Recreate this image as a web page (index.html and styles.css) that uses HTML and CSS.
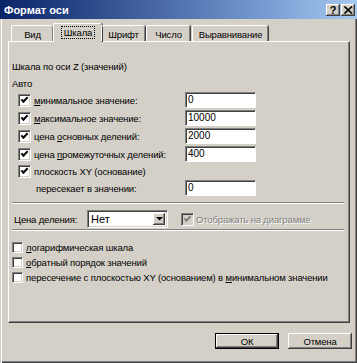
FILE: index.html
```html
<!DOCTYPE html>
<html lang="ru">
<head>
<meta charset="utf-8">
<title>Формат оси</title>
<link rel="stylesheet" href="styles.css">
</head>
<body>
<div class="window">
  <div class="titlebar">
    <span class="title">Формат оси</span>
    <div class="tb-buttons">
      <span class="tb-btn">?</span>
      <span class="tb-btn"><svg width="9" height="8" viewBox="0 0 9 8"><path d="M0.5 0.5 L8 7.5 M8 0.5 L0.5 7.5" stroke="#000" stroke-width="1.6"/></svg></span>
    </div>
  </div>
  <div class="frame">
    <div class="tabs">
      <div class="tab t1">Вид</div>
      <div class="tab active t2"><span class="focus">Шкала</span></div>
      <div class="tab t3">Шрифт</div>
      <div class="tab t4">Число</div>
      <div class="tab t5">Выравнивание</div>
    </div>
    <div class="panel">
      <div class="heading">Шкала по оси Z (значений)</div>
      <div class="auto">Авто</div>
      <div class="row">
        <label class="chk"><span class="box checked"></span><span><u>м</u>инимальное значение:</span></label>
        <span class="field">0</span>
      </div>
      <div class="row">
        <label class="chk"><span class="box checked"></span><span><u>м</u>аксимальное значение:</span></label>
        <span class="field">10000</span>
      </div>
      <div class="row">
        <label class="chk"><span class="box checked"></span><span>цена <u>о</u>сновных делений:</span></label>
        <span class="field">2000</span>
      </div>
      <div class="row">
        <label class="chk"><span class="box checked"></span><span>цена <u>п</u>ромежуточных делений:</span></label>
        <span class="field">400</span>
      </div>
      <div class="row short">
        <label class="chk"><span class="box checked"></span><span>плоскость XY (основание)</span></label>
      </div>
      <div class="row">
        <span class="indent">пересекает в значении:</span>
        <span class="field">0</span>
      </div>
      <div class="sep first"></div>
      <div class="unit-row">
        <span class="unit-label">Цена деления:</span>
        <span class="select"><span class="sel-text">Нет</span><span class="sel-btn"><svg width="7" height="4" viewBox="0 0 7 4"><path d="M0 0 H7 L3.5 3.5 Z" fill="#000"/></svg></span></span>
        <label class="chk disabled"><span class="box checked"></span><span>Отображать на диаграмме</span></label>
      </div>
      <div class="sep second"></div>
      <div class="opts">
        <label class="chk small"><span class="box"></span><span><u>л</u>огарифмическая шкала</span></label>
        <label class="chk small"><span class="box"></span><span><u>о</u>братный порядок значений</span></label>
        <label class="chk small"><span class="box"></span><span>пересечение с плоскостью XY (основанием) в <u>м</u>инимальном значении</span></label>
      </div>
    </div>
    <div class="buttons">
      <span class="btn default">ОК</span>
      <span class="btn">Отмена</span>
    </div>
  </div>
</div>
</body>
</html>
```

FILE: styles.css
```css
html, body {
  margin: 0;
  padding: 0;
  background: #d4d0c8;
}
body {
  font-family: "Liberation Sans", Arial, sans-serif;
  font-size: 9.5px;
  letter-spacing: -0.15px;
  color: #000;
}
.window {
  width: 357px;
  height: 363px;
  display: flex;
  flex-direction: column;
  overflow: hidden;
}
.titlebar {
  height: 19px;
  flex: none;
  background: linear-gradient(to right, #0a246a 0%, #3a5a98 35%, #7094cc 70%, #a6caf0 100%);
  display: flex;
  align-items: center;
  justify-content: space-between;
  padding: 0 2px 0 4px;
}
.title {
  color: #fff;
  font-weight: bold;
  font-size: 11px;
  letter-spacing: 0;
}
.tb-buttons {
  display: flex;
  gap: 1px;
}
.tb-btn {
  width: 14px;
  height: 12px;
  background: #d4d0c8;
  box-shadow: inset -1px -1px #404040, inset 1px 1px #fff, inset -2px -2px #808080;
  display: flex;
  align-items: center;
  justify-content: center;
  font-weight: bold;
  font-size: 11px;
  line-height: 12px;
}
.frame {
  flex: 1;
  border-left: 1px solid #d4d0c8;
  box-shadow: inset 1px 0 #fff, inset -1px -1px #404040, inset -2px -2px #808080;
  padding: 0 4px 0 8px;
  display: flex;
  flex-direction: column;
}
.tabs {
  height: 22px;
  display: flex;
  align-items: flex-end;
  padding-left: 2px;
  position: relative;
  z-index: 1;
}
.tab {
  box-sizing: border-box;
  height: 16px;
  border-top: 1px solid #fff;
  border-left: 1px solid #fff;
  border-radius: 2px 2px 0 0;
  box-shadow: inset -1px 0 #808080, 1px 0 #404040;
  display: flex;
  align-items: center;
  justify-content: center;
  padding-top: 1px;
  margin-right: 1px;
}
.t1 { width: 42px; }
.t2 { width: 49px; }
.t3 { width: 44px; }
.t4 { width: 44px; margin-right: 2px; }
.t5 { width: 76px; }
.tab.active {
  height: 19px;
  margin: 0 -1px -1px -1px;
  background: #d4d0c8;
  padding-top: 0;
  padding-bottom: 2px;
}
.focus {
  outline: 1px dotted #000;
  padding: 0 2px;
  line-height: 11px;
}
.panel {
  box-sizing: border-box;
  height: 282px;
  margin-left: -1px;
  width: 342px;
  border-top: 1px solid #fff;
  border-left: 1px solid #fff;
  border-right: 1px solid #404040;
  border-bottom: 1px solid #404040;
  box-shadow: inset -1px -1px #808080;
  padding: 18px 0 0 0;
  display: flex;
  flex-direction: column;
}
.heading {
  height: 14px;
  line-height: 14px;
  padding-left: 3px;
}
.auto {
  height: 14px;
  line-height: 14px;
  padding-left: 3px;
  margin-top: 3px;
}
.row {
  height: 18px;
  display: grid;
  grid-template-columns: 176px 70px;
  align-items: center;
}
.row.short {
  height: 16px;
}
.chk {
  display: flex;
  align-items: center;
  gap: 3px;
  padding-left: 9px;
  white-space: nowrap;
}
.box {
  box-sizing: border-box;
  width: 13px;
  height: 13px;
  flex: none;
  background: #fff;
  border-top: 1px solid #808080;
  border-left: 1px solid #808080;
  border-right: 1px solid #fff;
  border-bottom: 1px solid #fff;
  box-shadow: inset 1px 1px #404040, inset -1px -1px #d4d0c8;
  position: relative;
}
.box.checked::after {
  content: "";
  position: absolute;
  left: 2px;
  top: 1px;
  width: 5px;
  height: 2px;
  border-left: 2px solid #000;
  border-bottom: 2px solid #000;
  transform: translate(0, 1px) rotate(-45deg);
  transform-origin: center;
}
.indent {
  padding-left: 27px;
}
.field {
  box-sizing: border-box;
  height: 16px;
  width: 71px;
  background: #fff;
  border-top: 1px solid #808080;
  border-left: 1px solid #808080;
  border-right: 1px solid #fff;
  border-bottom: 1px solid #fff;
  box-shadow: inset 1px 1px #404040;
  padding-left: 2px;
  line-height: 14px;
  font-size: 10px;
  letter-spacing: 0;
}
.sep {
  height: 0;
  border-top: 1px solid #808080;
  border-bottom: 1px solid #fff;
  margin-left: 3px;
  width: 332px;
}
.sep.first { margin-top: 5px; }
.unit-row {
  margin-top: 6px;
  height: 18px;
  display: flex;
  align-items: center;
  padding-left: 5px;
}
.unit-label {
  width: 73px;
}
.select {
  box-sizing: border-box;
  width: 81px;
  height: 18px;
  background: #fff;
  border-top: 1px solid #808080;
  border-left: 1px solid #808080;
  border-right: 1px solid #fff;
  border-bottom: 1px solid #fff;
  box-shadow: inset 1px 1px #404040, inset -1px -1px #d4d0c8;
  display: flex;
  align-items: center;
  justify-content: space-between;
  padding: 2px 2px 2px 3px;
}
.sel-text {
  font-size: 11px;
  letter-spacing: 0;
}
.sel-btn {
  width: 12px;
  height: 12px;
  background: #d4d0c8;
  box-shadow: inset -1px -1px #404040, inset 1px 1px #fff, inset -2px -2px #808080;
  display: flex;
  align-items: center;
  justify-content: center;
}
.chk.disabled {
  padding-left: 13px;
  color: #808080;
  text-shadow: 1px 1px #fff;
  gap: 2px;
}
.chk.disabled .box {
  background: #d4d0c8;
}
.chk.disabled .box.checked::after {
  border-color: #808080;
}
.sep.second { margin-top: 1px; }
.opts {
  margin-top: 9px;
  display: flex;
  flex-direction: column;
}
.chk.small {
  height: 15px;
  padding-left: 3px;
}
.chk.small .box {
  width: 11px;
  height: 11px;
}
.buttons {
  display: flex;
  justify-content: flex-end;
  gap: 9px;
  margin-top: 10px;
  padding-right: 1px;
}
.btn {
  box-sizing: border-box;
  width: 64px;
  height: 16px;
  background: #d4d0c8;
  box-shadow: inset -1px -1px #404040, inset 1px 1px #fff, inset -2px -2px #808080;
  display: flex;
  align-items: center;
  justify-content: center;
}
.btn.default {
  border: 1px solid #000;
}
```
